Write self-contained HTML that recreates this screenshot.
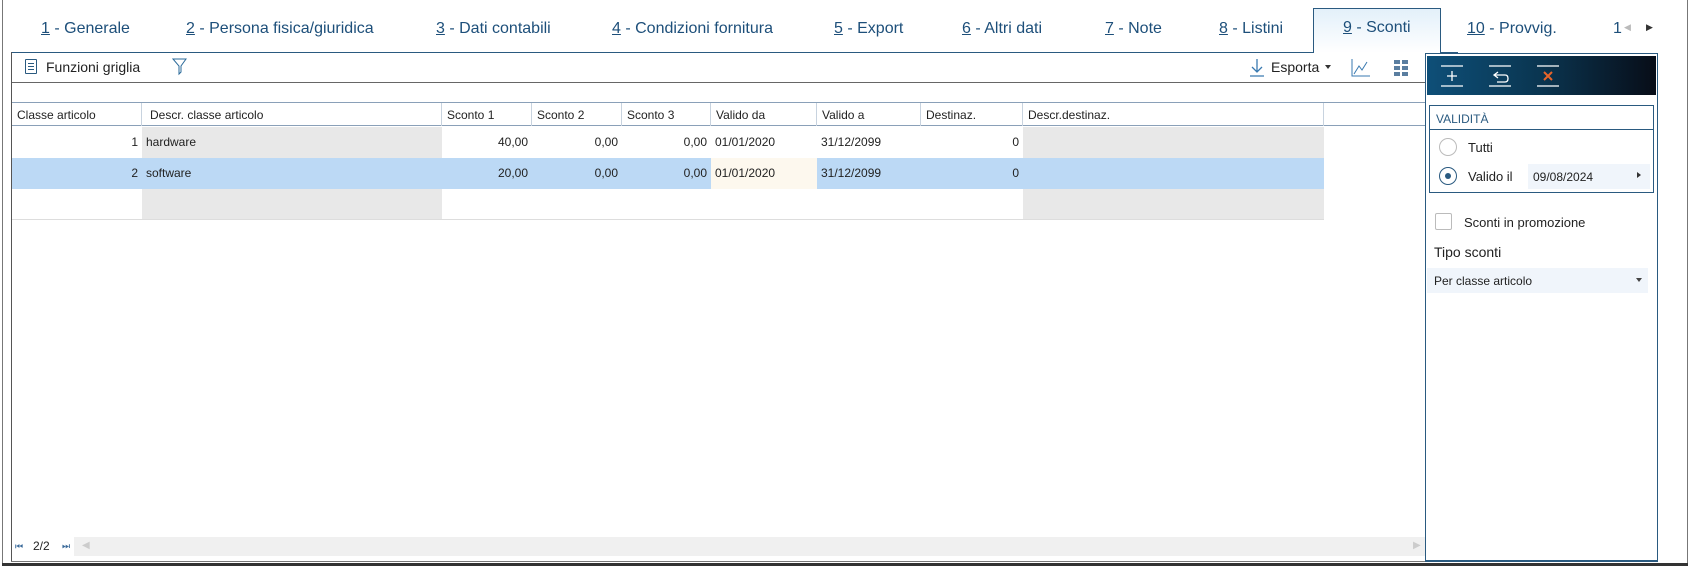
<!DOCTYPE html>
<html><head><meta charset="utf-8"><style>
*{margin:0;padding:0;box-sizing:border-box}
body{width:1695px;height:567px;background:#fff;position:relative;overflow:hidden;font-family:"Liberation Sans",sans-serif;color:#222}
.a{position:absolute}
.tab{position:absolute;top:20px;font-size:16px;color:#1d4f7a;white-space:nowrap}
.tab u{text-decoration:underline}
.hd{position:absolute;top:103px;height:23px;border-right:1px solid #c8d3df;padding:5px 5px;font-size:12px}
.c{position:absolute;font-size:12px;padding:0 4px;line-height:30px;height:31px}
.r{text-align:right}
</style></head><body>
<div class="a" style="left:2px;top:0;width:1px;height:565px;background:#777"></div>
<div class="a" style="left:1687px;top:0;width:1px;height:565px;background:#777"></div>
<div class="a" style="left:2px;top:563px;width:1686px;height:3px;background:#333"></div>

<div class="tab" style="left:41px"><u>1</u> - Generale</div>
<div class="tab" style="left:186px"><u>2</u> - Persona fisica/giuridica</div>
<div class="tab" style="left:436px"><u>3</u> - Dati contabili</div>
<div class="tab" style="left:612px"><u>4</u> - Condizioni fornitura</div>
<div class="tab" style="left:834px"><u>5</u> - Export</div>
<div class="tab" style="left:962px"><u>6</u> - Altri dati</div>
<div class="tab" style="left:1105px"><u>7</u> - Note</div>
<div class="tab" style="left:1219px"><u>8</u> - Listini</div>
<div class="a" style="left:1313px;top:8px;width:128px;height:45px;border:1px solid #2a5a80;border-bottom:none;background:linear-gradient(#e3f0fa,#fff)"></div>
<div class="tab" style="left:1343px;top:19px"><u>9</u> - Sconti</div>
<div class="tab" style="left:1467px"><u>10</u> - Provvig.</div>
<div class="tab" style="left:1613px">1</div>
<div class="a" style="left:1624px;top:22px;font-size:9px;color:#bbb">◀</div>
<div class="a" style="left:1646px;top:22px;font-size:9px;color:#333">▶</div>

<div class="a" style="left:11px;top:52px;width:1302px;height:1px;background:#2a5a80"></div>
<div class="a" style="left:1440px;top:52px;width:18px;height:1px;background:#2a5a80"></div>
<div class="a" style="left:11px;top:52px;width:1px;height:510px;background:#555"></div>
<div class="a" style="left:11px;top:561px;width:1415px;height:1px;background:#777"></div>
<div class="a" style="left:25px;top:59px;width:12px;height:15px;border:1px solid #2a5a80;border-radius:1px"></div>
<div class="a" style="left:28px;top:63px;width:6px;height:1px;background:#2a5a80;box-shadow:0 3px #2a5a80,0 6px #2a5a80"></div>
<div class="a" style="left:46px;top:59px;font-size:14px">Funzioni griglia</div>
<svg class="a" style="left:172px;top:58px" width="16" height="18"><path d="M1 1H14L9 8V14L7 16V8Z" fill="none" stroke="#2a6a9a" stroke-width="1"/></svg>
<svg class="a" style="left:1248px;top:58px" width="18" height="20"><path d="M9 1V14M4 9L9 14L14 9M2 18H16" fill="none" stroke="#3a7ab0" stroke-width="1.3"/></svg>
<div class="a" style="left:1271px;top:59px;font-size:14px">Esporta</div>
<div class="a" style="left:1325px;top:65px;border:3px solid transparent;border-top:4px solid #333"></div>
<svg class="a" style="left:1350px;top:57px" width="22" height="22"><path d="M2 2V19H20M4 17L9 9L12 13L17 5" fill="none" stroke="#3a7ab0" stroke-width="1"/></svg>
<svg class="a" style="left:1393px;top:59px" width="16" height="17"><g fill="#5a7ea0"><rect x="1" y="1" width="6" height="4"/><rect x="9" y="1" width="6" height="4"/><rect x="1" y="7" width="6" height="4"/><rect x="9" y="7" width="6" height="4"/><rect x="1" y="13" width="6" height="4"/><rect x="9" y="13" width="6" height="4"/></g></svg>
<div class="a" style="left:12px;top:82px;width:1413px;height:1px;background:#666"></div>

<div class="a" style="left:12px;top:102px;width:1413px;height:1px;background:#8aa0b8"></div>
<div class="a" style="left:12px;top:103px;width:1413px;height:23px;background:#fff;border-bottom:1px solid #8aa0b8"></div>
<div class="hd" style="left:12px;width:130px">Classe articolo</div>
<div class="hd" style="left:142px;width:300px;padding-left:8px">Descr. classe articolo</div>
<div class="hd" style="left:442px;width:90px">Sconto 1</div>
<div class="hd" style="left:532px;width:90px">Sconto 2</div>
<div class="hd" style="left:622px;width:89px">Sconto 3</div>
<div class="hd" style="left:711px;width:106px">Valido da</div>
<div class="hd" style="left:817px;width:104px">Valido a</div>
<div class="hd" style="left:921px;width:102px">Destinaz.</div>
<div class="hd" style="left:1023px;width:301px">Descr.destinaz.</div>

<div class="a" style="left:142px;top:127px;width:300px;height:31px;background:#e8e8e8"></div>
<div class="a" style="left:1023px;top:127px;width:301px;height:31px;background:#e8e8e8"></div>
<div class="a" style="left:12px;top:158px;width:1312px;height:31px;background:#bcd9f5"></div>
<div class="a" style="left:711px;top:158px;width:106px;height:31px;background:#fdf8ee"></div>
<div class="a" style="left:142px;top:189px;width:300px;height:30px;background:#e8e8e8"></div>
<div class="a" style="left:1023px;top:189px;width:301px;height:30px;background:#e8e8e8"></div>
<div class="a" style="left:12px;top:219px;width:1312px;height:1px;background:#ddd"></div>

<div class="c r" style="left:12px;top:127px;width:130px">1</div>
<div class="c" style="left:142px;top:127px">hardware</div>
<div class="c r" style="left:442px;top:127px;width:90px">40,00</div>
<div class="c r" style="left:532px;top:127px;width:90px">0,00</div>
<div class="c r" style="left:622px;top:127px;width:89px">0,00</div>
<div class="c" style="left:711px;top:127px">01/01/2020</div>
<div class="c" style="left:817px;top:127px">31/12/2099</div>
<div class="c r" style="left:921px;top:127px;width:102px">0</div>

<div class="c r" style="left:12px;top:158px;width:130px">2</div>
<div class="c" style="left:142px;top:158px">software</div>
<div class="c r" style="left:442px;top:158px;width:90px">20,00</div>
<div class="c r" style="left:532px;top:158px;width:90px">0,00</div>
<div class="c r" style="left:622px;top:158px;width:89px">0,00</div>
<div class="c" style="left:711px;top:158px">01/01/2020</div>
<div class="c" style="left:817px;top:158px">31/12/2099</div>
<div class="c r" style="left:921px;top:158px;width:102px">0</div>

<div class="a" style="left:12px;top:537px;width:1413px;height:19px;background:#f0f0f0"></div>
<div class="a" style="left:12px;top:537px;width:62px;height:19px;background:#fff"></div>
<div class="a" style="left:15px;top:541px;font-size:9px;color:#3a6a9a">⏮</div>
<div class="a" style="left:33px;top:539px;font-size:12px">2/2</div>
<div class="a" style="left:62px;top:541px;font-size:9px;color:#3a6a9a">⏭</div>
<div class="a" style="left:82px;top:540px;font-size:10px;color:#ccc">◀</div>
<div class="a" style="left:1413px;top:540px;font-size:10px;color:#ccc">▶</div>

<div class="a" style="left:1425px;top:53px;width:233px;height:509px;border:1px solid #2a5a80;border-bottom:2px solid #2a5a80"></div>
<div class="a" style="left:1427px;top:56px;width:229px;height:39px;background:linear-gradient(90deg,#0e4f78,#0a3550 50%,#080d18)"></div>
<svg class="a" style="left:1440px;top:63px" width="120" height="26"><g stroke="#fff" stroke-width="1.3" fill="none"><path d="M1 3H23M1 23H23M12 8V18M7 13H17"/><path d="M49 3H71M49 23H71M58 9L54 12L58 15M54 12H65Q68 12 68 15.5Q68 19 65 19H57"/><path d="M97 3H119M97 23H119"/></g><path d="M104 9L112 17M112 9L104 17" stroke="#e8642a" stroke-width="2"/></svg>
<div class="a" style="left:1429px;top:105px;width:225px;height:88px;border:1px solid #2a5a80"></div>
<div class="a" style="left:1430px;top:129px;width:223px;height:1px;background:#2a5a80"></div>
<div class="a" style="left:1436px;top:112px;font-size:12px;color:#2a5a80">VALIDITÀ</div>
<div class="a" style="left:1439px;top:138px;width:18px;height:18px;border:1px solid #bbb;border-radius:50%"></div>
<div class="a" style="left:1468px;top:140px;font-size:13px">Tutti</div>
<div class="a" style="left:1439px;top:167px;width:18px;height:18px;border:1.5px solid #2a5a80;border-radius:50%"></div>
<div class="a" style="left:1445px;top:173px;width:6px;height:6px;background:#2a5a80;border-radius:50%"></div>
<div class="a" style="left:1468px;top:169px;font-size:13px">Valido il</div>
<div class="a" style="left:1528px;top:164px;width:122px;height:25px;background:#f0f5fb"></div>
<div class="a" style="left:1533px;top:170px;font-size:12px">09/08/2024</div>
<div class="a" style="left:1637px;top:172px;border:3px solid transparent;border-left:4px solid #333"></div>
<div class="a" style="left:1435px;top:213px;width:17px;height:17px;border:1px solid #bbb;border-radius:2px"></div>
<div class="a" style="left:1464px;top:215px;font-size:13px">Sconti in promozione</div>
<div class="a" style="left:1434px;top:244px;font-size:14px">Tipo sconti</div>
<div class="a" style="left:1427px;top:268px;width:221px;height:25px;background:#f0f5fb"></div>
<div class="a" style="left:1434px;top:274px;font-size:12px">Per classe articolo</div>
<div class="a" style="left:1636px;top:278px;border:3.5px solid transparent;border-top:4px solid #444"></div>
</body></html>
